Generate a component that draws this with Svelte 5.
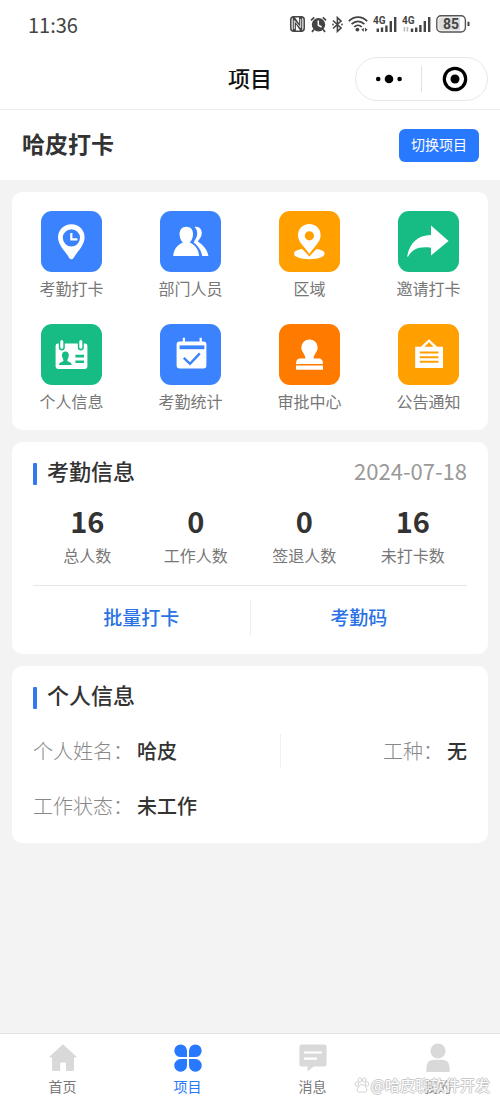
<script lang="ts">
    type Tab = { id: string; label: string };

    const menu = [
        { icon: 'clock', label: '考勤打卡', color: '#3b83fe' },
        { icon: 'people', label: '部门人员', color: '#3b83fe' },
        { icon: 'area', label: '区域', color: '#ff9f00' },
        { icon: 'share', label: '邀请打卡', color: '#17bb84' },
        { icon: 'card', label: '个人信息', color: '#17bb84' },
        { icon: 'calendar', label: '考勤统计', color: '#3b83fe' },
        { icon: 'stamp', label: '审批中心', color: '#ff7b00' },
        { icon: 'notice', label: '公告通知', color: '#ff9f00' }
    ];

    const stats = [
        { value: 16, label: '总人数' },
        { value: 0, label: '工作人数' },
        { value: 0, label: '签退人数' },
        { value: 16, label: '未打卡数' }
    ];

    const tabs: Tab[] = [
        { id: 'home', label: '首页' },
        { id: 'project', label: '项目' },
        { id: 'message', label: '消息' },
        { id: 'mine', label: '我的' }
    ];

    let activeTab = $state('project');
</script>

<div class="page">
    <div class="status">
        <span class="time">11:36</span>
        <div class="indicators">
            <svg width="15" height="16" viewBox="0 0 15 16">
                <rect x="0.8" y="0.8" width="13.4" height="14.4" rx="3" fill="none" stroke="#444" stroke-width="1.5" />
                <path d="M4.3 15V3.2L10.7 12.6V1" fill="none" stroke="#444" stroke-width="3.2" />
                <path d="M4.3 13V4.6L10.7 11.6V3" fill="none" stroke="#fff" stroke-width="0.9" />
            </svg>
            <svg width="17" height="17" viewBox="0 0 17 17">
                <circle cx="8.5" cy="8.7" r="6.7" fill="#444" />
                <path d="M1 4.4L4.2 1.4M16 4.4L12.8 1.4M3.8 13.6L2 16M13.2 13.6L15 16" stroke="#444" stroke-width="1.7" />
                <path d="M8.3 4.6V9.2L11.6 11" fill="none" stroke="#fff" stroke-width="1.5" />
            </svg>
            <svg width="11" height="17" viewBox="0 0 11 17">
                <path d="M1 4.5L9 12L5.4 15.4V1.6L9 5L1 12.5" fill="none" stroke="#444" stroke-width="1.6" />
                <circle cx="1" cy="8.5" r="0.9" fill="#444" />
                <circle cx="10" cy="8.5" r="0.9" fill="#444" />
            </svg>
            <svg width="20" height="16" viewBox="0 0 20 16">
                <path d="M0.8 5.2C6 -0.2 14 -0.2 19.2 5.2M3.6 8.2C7.4 4.4 12.6 4.4 16.4 8.2M6.2 11C8.4 8.8 11.6 8.8 13.8 11" fill="none" stroke="#444" stroke-width="1.7" />
                <circle cx="9.4" cy="13.6" r="1.9" fill="#444" />
                <path d="M13.4 13.8L15.8 11.8V15.8ZM19.6 13.8L17 11.8V15.8Z" fill="#444" />
            </svg>
            <svg width="24" height="17" viewBox="0 0 24 17">
                <text x="0" y="8" font-size="10" font-weight="700" fill="#444">4G</text>
                <path d="M4.8 12.5V16M9 11.5V16M13.4 9.5V16M17.8 5V16M22.2 1V16" stroke="#444" stroke-width="2.4" />
            </svg>
            <svg width="29" height="17" viewBox="0 0 29 17">
                <text x="0" y="8" font-size="10" font-weight="700" fill="#444">4G</text>
                <path d="M2.4 11V15.6M5.4 11V15.6" stroke="#bbb" stroke-width="1.6" />
                <path d="M10 12.5V16M14.2 11.5V16M18.4 9V16M22.8 5V16M27.2 1V16" stroke="#444" stroke-width="2.4" />
            </svg>
            <svg width="35" height="18" viewBox="0 0 35 18">
                <rect x="0.8" y="0.8" width="28.6" height="16.2" rx="4.4" fill="#fff" stroke="#555" stroke-width="1.4" />
                <path d="M5 2.4H24V15.4H5A2.6 2.6 0 0 1 2.4 12.8V5A2.6 2.6 0 0 1 5 2.4Z" fill="#dcdcdc" />
                <path d="M32.5 6.8V11" stroke="#444" stroke-width="2" />
                <text x="15" y="14" font-size="14" font-weight="700" text-anchor="middle" fill="#444">85</text>
            </svg>
        </div>
    </div>

    <header class="navbar">
        <h1>项目</h1>
        <div class="capsule">
            <button aria-label="更多">
                <svg width="28" height="10" viewBox="0 0 28 10">
                    <circle cx="3.2" cy="5" r="2.3" />
                    <circle cx="14" cy="5" r="4.3" />
                    <circle cx="24.6" cy="5" r="2.3" />
                </svg>
            </button>
            <button aria-label="关闭">
                <svg width="26" height="26" viewBox="0 0 26 26">
                    <circle cx="13" cy="13" r="10.7" fill="none" stroke="#000" stroke-width="3.2" />
                    <circle cx="13" cy="13" r="4.5" />
                </svg>
            </button>
        </div>
    </header>

    <section class="project">
        <h2>哈皮打卡</h2>
        <button class="switch">切换项目</button>
    </section>

    <main>
        <nav class="card menu">
            {#each menu as item (item.icon)}
                <button class="menu-item">
                    <span class="tile" style="background: {item.color}">
                        <svg width="61" height="61" viewBox="0 0 61 61" fill="#fff">
                            {#if item.icon === 'clock'}
                                <path fill-rule="evenodd" d="M30.5 13.2C22.9 13.2 17 19 17 26.2C17 34.6 25 40.6 28 46.7Q30.4 49.8 32.8 46.7C36 40.6 43.6 34.6 43.6 26.2C43.6 19 38 13.2 30.5 13.2ZM30.4 18.2A8.6 8.6 0 1 1 30.4 35.4A8.6 8.6 0 1 1 30.4 18.2Z" />
                                <path d="M30.3 22V28.3H36.4" fill="none" stroke="#fff" stroke-width="2.2" />
                            {:else if item.icon === 'people'}
                                <path d="M26.3 15.8C31 15.8 33.4 19.2 33 24C32.7 27.4 31.3 30 29.6 31.6C34.6 33.6 38.6 38 39.2 45H13.2C13.8 38 18 33.6 23 31.6C21.2 30 19.9 27.4 19.6 24C19.2 19.2 21.8 15.8 26.3 15.8Z" />
                                <path d="M34.6 16C39.4 15 42 18.6 41.8 22.6C41.6 26.2 39.6 28 37.8 30.4C43.6 34.6 47.4 38.4 48.4 45H42.2C41.2 39 38.2 35 33.6 31.4C34.8 28.8 37 26.8 37.2 23.2C37.4 20 36.4 17.8 34.6 16Z" />
                            {:else if item.icon === 'area'}
                                <path fill-rule="evenodd" d="M30.4 13C23.6 13 19 18 19 24.2C19 31.4 26.8 37 30.4 43C34 37 41.6 31.4 41.6 24.2C41.6 18 37.2 13 30.4 13ZM30.4 20.2A4.6 4.6 0 1 1 30.4 29.4A4.6 4.6 0 1 1 30.4 20.2Z" />
                                <path d="M23.2 38C18 38.6 15 40.4 15 42.6C15 46 22 48.2 30.4 48.2S45.6 46 45.6 42.6C45.6 40.4 42.6 38.6 37.4 38L30.4 45.4Z" />
                            {:else if item.icon === 'share'}
                                <path d="M33 14.6L50.6 30L33 44.6V36.8C20.6 35 14.4 38.4 10.2 45.4Q9 46.6 9.4 44.2C12 32 19.4 24.4 33 24Z" />
                            {:else if item.icon === 'card'}
                                <path d="M17 19.6H44Q46.4 19.6 46.4 22V42.6Q46.4 45 44 45H17Q14.6 45 14.6 42.6V22Q14.6 19.6 17 19.6Z" />
                                <path d="M20.8 17.8V23.4M39.8 17.8V23.4" stroke="#17bb84" stroke-width="6" stroke-linecap="round" />
                                <path d="M20.8 17.6V23.2M39.8 17.6V23.2" stroke="#fff" stroke-width="3" stroke-linecap="round" />
                                <path d="M24.4 27.4C27 27.4 28.2 29.4 27.8 32C27.5 34 26.6 35.2 26.2 36.4C26.6 38 30.8 37.6 30.8 41H18C18 37.6 22.2 38 22.6 36.4C22.2 35.2 21.3 34 21 32C20.6 29.4 22 27.4 24.4 27.4ZM34.4 30.8H43V33.4H34.4ZM34.4 36.4H43V39H34.4Z" fill="#17bb84" />
                            {:else if item.icon === 'calendar'}
                                <path d="M19.6 17.6H43.4Q46.4 17.6 46.4 20.6V41.4Q46.4 44.4 43.4 44.4H19.6Q16.6 44.4 16.6 41.4V20.6Q16.6 17.6 19.6 17.6ZM22.8 13.8H25V20H22.8ZM39.6 13.8H41.8V20H39.6Z" />
                                <path d="M19.6 21.4H44.4V25.2H19.6Z" fill="#3b83fe" />
                                <path d="M23.8 33.8L30 39.8L39.8 29.4" fill="none" stroke="#3b83fe" stroke-width="2.4" />
                            {:else if item.icon === 'stamp'}
                                <path d="M30.5 15.4A8.2 8.2 0 0 0 22.3 23.6C22.3 28 26.4 30.4 26.4 34.6H20.6Q17 35 17 40H44Q44 35 40.4 34.6H34.6C34.6 30.4 38.7 28 38.7 23.6A8.2 8.2 0 0 0 30.5 15.4ZM17 41.4H44V45.8H17Z" />
                            {:else}
                                <path fill-rule="evenodd" d="M31 15.2L39.2 22.8H45V44H17.2V22.8H22.8ZM31 18.2L26.4 22.8H35.6Z" />
                                <path d="M21.8 28.6H40.4M21.8 33.2H40.4M21.8 37.8H40.4" stroke="#ff9f00" stroke-width="2" />
                            {/if}
                        </svg>
                    </span>
                    <span class="menu-label">{item.label}</span>
                </button>
            {/each}
        </nav>

        <section class="card">
            <div class="card-head">
                <h3>考勤信息</h3>
                <time datetime="2024-07-18">2024-07-18</time>
            </div>
            <div class="stats">
                {#each stats as item (item.label)}
                    <div class="stat">
                        <strong>{item.value}</strong>
                        <span>{item.label}</span>
                    </div>
                {/each}
            </div>
            <div class="actions">
                <button>批量打卡</button>
                <button>考勤码</button>
            </div>
        </section>

        <section class="card">
            <div class="card-head">
                <h3>个人信息</h3>
            </div>
            <dl>
                <div class="row">
                    <div class="field name">
                        <dt>个人姓名：</dt>
                        <dd>哈皮</dd>
                    </div>
                    <div class="field work">
                        <dt>工种：</dt>
                        <dd>无</dd>
                    </div>
                </div>
                <div class="row">
                    <div class="field">
                        <dt>工作状态：</dt>
                        <dd>未工作</dd>
                    </div>
                </div>
            </dl>
        </section>
    </main>

    <nav class="tabbar">
        {#each tabs as tab (tab.id)}
            <button class="tab" class:active={activeTab === tab.id} onclick={() => (activeTab = tab.id)}>
                <svg width="30" height="30" viewBox="0 0 30 30" fill="currentColor">
                    {#if tab.id === 'home'}
                        <path d="M15 1.2L28.4 13.4Q29 14.6 27.6 14.6H26V26.4Q26 28 24.4 28H18V20.6Q18 19.4 16.8 19.4H13.4Q12.2 19.4 12.2 20.6V28H5.6Q4 28 4 26.4V14.6H2.4Q1 14.6 1.6 13.4Z" />
                    {:else if tab.id === 'project'}
                        <path d="M7.6 1.4A6.4 6.4 0 0 1 14 7.8V14H7.6A6.3 6.3 0 0 1 7.6 1.4ZM22.4 1.4A6.3 6.3 0 0 1 22.4 14H16V7.8A6.4 6.4 0 0 1 22.4 1.4ZM7.6 16H14V22.2A6.4 6.4 0 1 1 7.6 16ZM16 16H22.4A6.4 6.4 0 1 1 16 22.2Z" />
                    {:else if tab.id === 'message'}
                        <path fill-rule="evenodd" d="M3.4 1.6H26.6Q28.6 1.6 28.6 3.6V21.4Q28.6 23.4 26.6 23.4H15.8L9.6 28.4V23.4H3.4Q1.4 23.4 1.4 21.4V3.6Q1.4 1.6 3.4 1.6ZM6 8.4V10.6H24V8.4ZM6 14.6V16.8H19V14.6Z" />
                    {:else}
                        <circle cx="15" cy="8" r="7.6" />
                        <path d="M3.4 29V25Q3.4 16.8 11.4 16.8H18.6Q26.6 16.8 26.6 25V29Z" />
                    {/if}
                </svg>
                <span>{tab.label}</span>
            </button>
        {/each}
        <div class="watermark">
            <svg width="16" height="16" viewBox="0 0 15 16" fill="#fff" stroke="#c4c4c4" stroke-width="0.9">
                <ellipse cx="2.4" cy="7" rx="1.7" ry="2.2" />
                <ellipse cx="5.4" cy="3" rx="1.7" ry="2.3" />
                <ellipse cx="9.8" cy="3" rx="1.7" ry="2.3" />
                <ellipse cx="12.6" cy="7" rx="1.7" ry="2.2" />
                <path d="M7.5 7.4C10 7.4 12.6 11 12.4 13.2C12 16 9 15 7.5 15S3 16 2.6 13.2C2.4 11 5 7.4 7.5 7.4Z" />
            </svg>
            <span>@哈皮聊软件开发</span>
        </div>
    </nav>
</div>

<style>
    :global(body) {
        margin: 0;
        background: #f3f3f3;
    }

    .page {
        display: flex;
        flex-direction: column;
        min-height: 100vh;
        font-family: "Noto Sans CJK SC", sans-serif;
        color: #333;
    }

    h1, h2, h3, dl, dd {
        margin: 0;
        font-weight: 500;
    }

    button {
        padding: 0;
        border: 0;
        background: none;
        font-family: inherit;
        color: inherit;
        cursor: pointer;
    }

    svg {
        display: block;
    }

    .status {
        display: flex;
        align-items: center;
        justify-content: space-between;
        height: 48px;
        padding: 0 29px 0 28px;
        background: #fff;
    }

    .time {
        font-size: 20px;
        color: #444;
    }

    .indicators {
        display: flex;
        align-items: center;
        gap: 5px;
        font-family: Roboto, sans-serif;
    }

    .navbar {
        display: grid;
        grid-template-columns: 1fr auto 1fr;
        align-items: center;
        height: 61px;
        padding: 0 12px;
        background: #fff;
        border-bottom: 1px solid #ececec;
    }

    h1 {
        grid-column: 2;
        padding-bottom: 4px;
        font-size: 22px;
        color: #111;
    }

    .capsule {
        display: flex;
        justify-self: end;
        box-sizing: border-box;
        width: 133px;
        height: 44px;
        padding: 8px 0;
        border: 1px solid #e8e8e8;
        border-radius: 22px;
    }

    .capsule button {
        display: flex;
        flex: 1;
        align-items: center;
        justify-content: center;
    }

    .capsule button + button {
        border-left: 1px solid #e2e2e2;
    }

    .project {
        display: flex;
        align-items: center;
        justify-content: space-between;
        height: 70px;
        padding: 0 21px 0 22px;
        background: #fff;
    }

    h2 {
        padding-bottom: 4px;
        font-size: 23px;
        font-weight: 700;
    }

    .switch {
        height: 33px;
        padding: 0 12px 2px;
        border-radius: 6px;
        background: #2979ff;
        font-size: 14px;
        color: #fff;
    }

    main {
        display: flex;
        flex: 1;
        flex-direction: column;
        gap: 12px;
        padding: 12px;
    }

    .card {
        padding: 13px 21px 10px;
        border-radius: 10px;
        background: #fff;
    }

    .menu {
        display: grid;
        grid-template-columns: repeat(4, 1fr);
        row-gap: 20px;
        padding: 19px 0 13px;
    }

    .menu-item {
        display: flex;
        flex-direction: column;
        align-items: center;
    }

    .tile {
        border-radius: 11px;
    }

    .menu-label {
        font-size: 16px;
        line-height: 32px;
        color: #777;
    }

    .card-head {
        display: flex;
        align-items: flex-start;
        justify-content: space-between;
        height: 34px;
        line-height: 30px;
    }

    h3 {
        display: flex;
        align-items: flex-end;
        gap: 10px;
        font-size: 22px;
    }

    h3::before {
        content: "";
        width: 4px;
        height: 22px;
        border-radius: 1px;
        background: #3478f0;
    }

    time {
        font-size: 22px;
        color: #999;
    }

    .stats {
        display: grid;
        grid-template-columns: repeat(4, 1fr);
        padding: 12px 0 14px;
        border-bottom: 1px solid #e8e8e8;
    }

    .stat {
        display: flex;
        flex-direction: column;
        align-items: center;
    }

    .stat strong {
        font-size: 29px;
        line-height: 38px;
    }

    .stat span {
        font-size: 16px;
        line-height: 32px;
        color: #777;
    }

    .actions {
        display: flex;
        padding: 14px 0 8px;
    }

    .actions button {
        flex: 1;
        height: 36px;
        padding-bottom: 4px;
        font-size: 19px;
        font-weight: 500;
        color: #2a72e5;
    }

    .actions button + button {
        border-left: 1px solid #f0f0f0;
    }

    dl {
        padding-top: 10px;
    }

    .row {
        display: flex;
        align-items: center;
        height: 55px;
    }

    .field {
        display: flex;
        gap: 4px;
        font-size: 20px;
        line-height: 34px;
    }

    .name {
        flex: 4;
        border-right: 1px solid #f0f0f0;
    }

    .work {
        flex: 3;
        justify-content: flex-end;
    }

    dt {
        font-weight: 300;
        color: #888;
    }

    .tabbar {
        position: relative;
        display: flex;
        height: 69px;
        border-top: 1px solid #e2e2e2;
        background: #fff;
    }

    .tab {
        display: flex;
        flex: 1;
        flex-direction: column;
        align-items: center;
        padding-top: 9px;
        color: #d9d9d9;
    }

    .tab span {
        font-size: 14px;
        line-height: 26px;
        color: #777;
    }

    .tab.active,
    .tab.active span {
        color: #2979ff;
    }

    .watermark {
        position: absolute;
        right: 10px;
        bottom: 6px;
        display: flex;
        align-items: center;
        gap: 1px;
        font-size: 15px;
        line-height: 24px;
        color: #fff;
        opacity: 0.85;
        text-shadow: 1px 0 #c0c0c0, -1px 0 #c0c0c0, 0 1px #c0c0c0, 0 -1px #c0c0c0;
        pointer-events: none;
    }
</style>
